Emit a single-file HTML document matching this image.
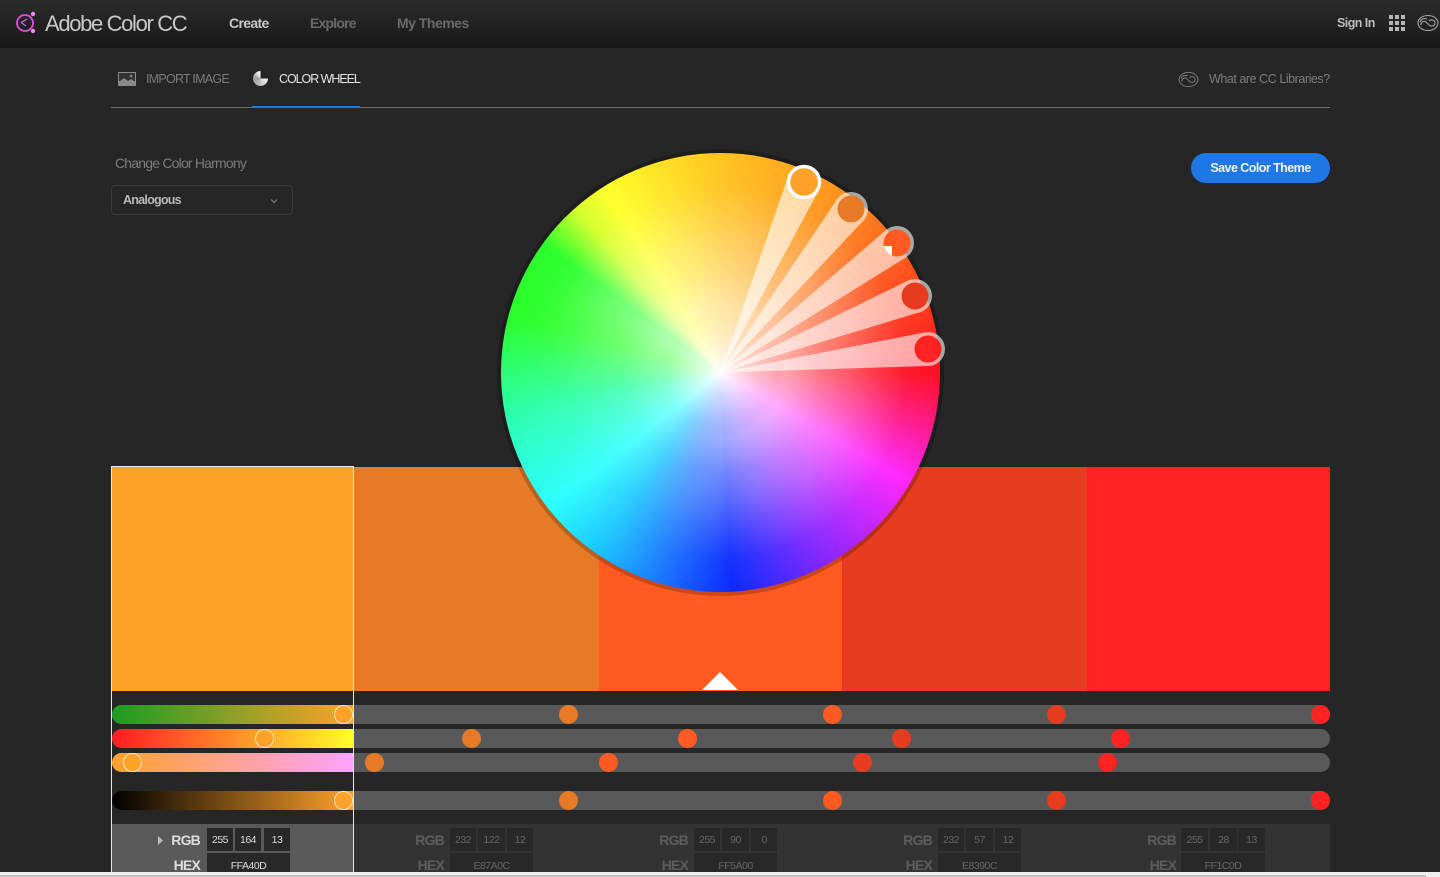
<!DOCTYPE html>
<html><head><meta charset="utf-8"><style>
*{box-sizing:border-box}
html,body{margin:0;padding:0;width:1440px;height:877px;overflow:hidden;background:#262626}
body{position:relative;font-family:"Liberation Sans",sans-serif;filter:blur(.3px)}
.a{position:absolute;white-space:nowrap}
.hdr{position:absolute;left:0;top:0;width:1440px;height:48px;background:linear-gradient(#2b2b2b,#191919)}
.sw{position:absolute;top:467px;height:224px}
.tr{position:absolute;left:112px;width:1218px;height:19px;background:#595959;border-radius:9.5px}
.g{position:absolute;left:112px;width:242px;height:19px;border-radius:9.5px 0 0 9.5px}
.d{position:absolute;width:19px;height:19px;border-radius:50%}
.h{position:absolute;width:19px;height:19px;border-radius:50%;border:1px solid #ffe6c0;background:#ffa22b}
.box{position:absolute;background:#282828;color:#ddd;font-size:10.5px;letter-spacing:-.5px;text-align:center;height:23px;line-height:24px;top:828px}
.hx{top:853px;height:19px;line-height:27px;overflow:hidden}
.dim{color:#666}.lab{position:absolute;font-weight:bold;font-size:14px;letter-spacing:-.8px;text-align:right;width:50px;color:#ddd}
.ld{color:#5d5d5d}
.wh{border-radius:50%}
</style></head><body>
<div class="hdr"></div>
<svg class="a" style="left:14px;top:10px" width="26" height="26" viewBox="0 0 26 26" fill="none"><circle cx="11" cy="13" r="8" stroke="#e050e0" stroke-width="1.8"/><path d="M7 12.500L13 9M7 12.500L12 16" stroke="#e060e0" stroke-width="1.2"/><circle cx="19" cy="4" r="2.200" fill="#f08af0"/><circle cx="19" cy="21" r="2.200" fill="#f08af0"/></svg>
<div class="a" style="left:45px;top:10px;font-size:22px;line-height:27px;letter-spacing:-1.35px;color:#c9c9c9">Adobe Color CC</div>
<div class="a" style="left:229px;top:15px;font-size:14px;line-height:17px;font-weight:bold;letter-spacing:-.65px;color:#c8c8c8">Create</div>
<div class="a" style="left:310px;top:15px;font-size:14px;line-height:17px;font-weight:bold;letter-spacing:-.8px;color:#6a6a6a">Explore</div>
<div class="a" style="left:397px;top:15px;font-size:14px;line-height:17px;font-weight:bold;letter-spacing:-.5px;color:#6a6a6a">My Themes</div>
<div class="a" style="left:1337px;top:16px;font-size:12.5px;line-height:15px;font-weight:bold;letter-spacing:-.55px;color:#bdbdbd">Sign In</div>
<svg class="a" style="left:1389px;top:15px" width="16" height="16" fill="#b5b5b5"><rect width="4" height="4"/><rect x="6" width="4" height="4"/><rect x="12" width="4" height="4"/><rect y="6" width="4" height="4"/><rect x="6" y="6" width="4" height="4"/><rect x="12" y="6" width="4" height="4"/><rect y="12" width="4" height="4"/><rect x="6" y="12" width="4" height="4"/><rect x="12" y="12" width="4" height="4"/></svg>
<svg class="a" style="left:1417px;top:14px" width="22" height="18" viewBox="0 0 22 18" fill="none" stroke="#a5a5a5" stroke-width="1.1"><ellipse cx="11" cy="9" rx="10" ry="7.500"/><path d="M4 11c0-3 3-4.500 5-3l3 3c2 2 6 1 6-2s-4-4-6-2M3 8c1-3 4-4 7-3"/></svg>

<svg class="a" style="left:118px;top:72px" width="18" height="14"><rect width="18" height="14" fill="#8a8a8a"/><rect x="1" y="1" width="16" height="8" fill="#333"/><path d="M1 10l5-4 4 3 3-2 4 3v3H1z" fill="#8a8a8a"/><circle cx="13" cy="4" r="1.300" fill="#8a8a8a"/></svg>
<div class="a" style="left:146px;top:72px;font-size:12.5px;line-height:15px;letter-spacing:-.75px;color:#7b7b7b">IMPORT IMAGE</div>
<div class="a" style="left:253px;top:71px;width:15px;height:15px;border-radius:50%;background:conic-gradient(#222 0 90deg,#eee 90deg,#999 270deg,#fff 360deg)"></div>
<div class="a" style="left:279px;top:72px;font-size:12.5px;line-height:15px;letter-spacing:-1.05px;color:#e4e4e4">COLOR WHEEL</div>
<svg class="a" style="left:1178px;top:71px" width="21" height="17" viewBox="0 0 22 18" fill="none" stroke="#777" stroke-width="1.1"><ellipse cx="11" cy="9" rx="10" ry="7.500"/><path d="M4 11c0-3 3-4.500 5-3l3 3c2 2 6 1 6-2s-4-4-6-2M3 8c1-3 4-4 7-3"/></svg>
<div class="a" style="left:1209px;top:72px;font-size:12.5px;line-height:15px;letter-spacing:-.45px;color:#7d7d7d">What are CC Libraries?</div>
<div class="a" style="left:111px;top:107px;width:1219px;height:1px;background:#6e6e6e"></div>
<div class="a" style="left:252px;top:106px;width:108px;height:2px;background:#2277d8"></div>

<div class="a" style="left:115px;top:155px;font-size:14px;line-height:16px;letter-spacing:-.8px;color:#7c7c7c">Change Color Harmony</div>
<div class="a" style="left:111px;top:185px;width:182px;height:30px;border:1px solid #3a3a3a;border-radius:4px"></div>
<div class="a" style="left:123px;top:193px;font-size:12.5px;line-height:15px;font-weight:bold;letter-spacing:-.75px;color:#b9b9b9">Analogous</div>
<svg class="a" style="left:270px;top:198px" width="8" height="6" fill="none" stroke="#888" stroke-width="1"><path d="M1 1.500l3 3 3-3"/></svg>
<div class="a" style="left:1191px;top:153px;width:139px;height:30px;border-radius:15px;background:#1f77e6;color:#f2f2f2;text-align:center;font-size:12.5px;line-height:30px;font-weight:bold;letter-spacing:-.55px">Save Color Theme</div>

<div class="sw" style="left:111px;width:243px;background:#ffa22b"></div>
<div class="sw" style="left:354px;width:245px;background:#e67a26"></div>
<div class="sw" style="left:599px;width:243px;background:#ff5a20"></div>
<div class="sw" style="left:842px;width:245px;background:#e73c20"></div>
<div class="sw" style="left:1087px;width:243px;background:#ff2222"></div>

<div class="a wh" style="left:497px;top:149px;width:447px;height:447px;background:rgba(0,0,0,.2)"></div>
<div class="a wh" style="left:501px;top:153px;width:439px;height:439px;background:radial-gradient(circle closest-side,#fff 0,rgba(255,255,255,.8) 8%,rgba(255,255,255,.42) 25%,rgba(255,255,255,.2) 45%,rgba(255,255,255,.08) 70%,rgba(255,255,255,0) 100%),conic-gradient(#ffc41f 0deg,#ffa41d 23deg,#ff8a1d 38deg,#ff601b 55deg,#ff3a1c 72deg,#ff0f22 90deg,#ff1a96 106deg,#ff26ff 120deg,#8a26ff 150deg,#0a2aff 177deg,#1a70ff 195deg,#1ac8ff 215deg,#2affff 232deg,#2affb0 258deg,#2aff2a 285deg,#2aff2a 306deg,#d0ff2a 318deg,#ffff2a 328deg,#ffc41f 360deg)"></div>
<div class="a wh" style="left:501px;top:153px;width:439px;height:439px;background:radial-gradient(circle closest-side,rgba(255,255,255,.2) 0,rgba(255,255,255,.38) 30%,rgba(255,255,255,.2) 58%,rgba(255,255,255,0) 85%);-webkit-mask-image:conic-gradient(#000 0deg,#000 180deg,transparent 215deg,transparent 262deg,#000 300deg,#000 360deg);mask-image:conic-gradient(#000 0deg,#000 180deg,transparent 215deg,transparent 262deg,#000 300deg,#000 360deg)"></div>

<svg class="a" style="left:0;top:0" width="1440" height="700">
<g fill="#fff" opacity=".62">
<path d="M720.500 372.500L788.400 175.200 819.600 188.800z"/><circle cx="804" cy="182" r="17"/>
</g>
<g fill="#fff" opacity=".6"><path d="M720.500 372.500L837.700 198.400 864.300 219.600z"/><circle cx="851" cy="209" r="17"/></g>
<g fill="#fff" opacity=".6"><path d="M720.500 372.500L886.900 229.300 907.100 256.700z"/><circle cx="897" cy="243" r="17"/></g>
<g fill="#fff" opacity=".6"><path d="M720.500 372.500L908.700 280.200 921.300 311.800z"/><circle cx="915" cy="296" r="17"/></g>
<g fill="#fff" opacity=".6"><path d="M720.500 372.500L926 332.100 930 365.900z"/><circle cx="928" cy="349" r="17"/></g>
<circle cx="804" cy="182" r="15.500" fill="#ffa22b" stroke="#fff" stroke-width="3.500"/>
<circle cx="851" cy="209" r="13.500" fill="#e67a26"/>
<circle cx="897" cy="243" r="13.500" fill="#ff5a20"/>
<path d="M884 246H892V255.500A13.500 13.500 0 0 1 884 246z" fill="#fff"/>
<circle cx="915" cy="296" r="13.500" fill="#e73c20"/>
<circle cx="928" cy="349" r="13.500" fill="#ff2222"/>
<path d="M702 690L720 672 738 690z" fill="#fff"/>
</svg>

<div class="tr" style="top:705px"></div><div class="tr" style="top:729px"></div><div class="tr" style="top:753px"></div><div class="tr" style="top:791px"></div>
<div class="g" style="top:705px;background:linear-gradient(90deg,#1c9c22,#ffa22b)"></div>
<div class="g" style="top:729px;background:linear-gradient(90deg,#ff1c22,#ffa22b 60%,#ffff2a)"></div>
<div class="g" style="top:753px;background:linear-gradient(90deg,#ffa22b,#ffa2ff)"></div>
<div class="g" style="top:791px;background:linear-gradient(90deg,#000,#ffa22b)"></div>

<div class="h" style="left:334px;top:705px"></div><div class="h" style="left:254.500px;top:729px"></div><div class="h" style="left:122.500px;top:753px"></div><div class="h" style="left:334px;top:791px"></div>

<div class="d" style="left:559px;top:705px;background:#e67a26"></div><div class="d" style="left:823px;top:705px;background:#ff5a20"></div><div class="d" style="left:1047px;top:705px;background:#e73c20"></div><div class="d" style="left:1311px;top:705px;background:#ff2222"></div>
<div class="d" style="left:461.500px;top:729px;background:#e67a26"></div><div class="d" style="left:678px;top:729px;background:#ff5a20"></div><div class="d" style="left:892px;top:729px;background:#e73c20"></div><div class="d" style="left:1111px;top:729px;background:#ff2222"></div>
<div class="d" style="left:365px;top:753px;background:#e67a26"></div><div class="d" style="left:598.500px;top:753px;background:#ff5a20"></div><div class="d" style="left:852.500px;top:753px;background:#e73c20"></div><div class="d" style="left:1097.500px;top:753px;background:#ff2222"></div>
<div class="d" style="left:559px;top:791px;background:#e67a26"></div><div class="d" style="left:823px;top:791px;background:#ff5a20"></div><div class="d" style="left:1047px;top:791px;background:#e73c20"></div><div class="d" style="left:1311px;top:791px;background:#ff2222"></div>

<div class="a" style="left:112px;top:824px;width:242px;height:48px;background:#5a5a5a"></div>
<div class="a" style="left:354px;top:824px;width:976px;height:48px;background:#333"></div>
<svg class="a" style="left:158px;top:836px" width="6" height="9"><path d="M0 0l5 4.500-5 4.500z" fill="#bbb"/></svg>
<div class="lab" style="left:150px;top:832px">RGB</div>
<div class="lab" style="left:150px;top:857px;line-height:16px">HEX</div>
<div class="box" style="left:207px;width:26px">255</div><div class="box" style="left:235px;width:26px">164</div><div class="box" style="left:264px;width:26px">13</div><div class="box hx" style="left:207px;width:83px">FFA40D</div>

<div class="lab ld" style="left:394px;top:832px">RGB</div><div class="lab ld" style="left:394px;top:857px;line-height:16px">HEX</div>
<div class="box dim" style="left:450px;width:26px">232</div><div class="box dim" style="left:478px;width:27px">122</div><div class="box dim" style="left:507px;width:26px">12</div><div class="box dim hx" style="left:450px;width:83px">E87A0C</div>

<div class="lab ld" style="left:638px;top:832px">RGB</div><div class="lab ld" style="left:638px;top:857px;line-height:16px">HEX</div>
<div class="box dim" style="left:694px;width:26px">255</div><div class="box dim" style="left:722px;width:27px">90</div><div class="box dim" style="left:751px;width:26px">0</div><div class="box dim hx" style="left:694px;width:83px">FF5A00</div>

<div class="lab ld" style="left:882px;top:832px">RGB</div><div class="lab ld" style="left:882px;top:857px;line-height:16px">HEX</div>
<div class="box dim" style="left:938px;width:26px">232</div><div class="box dim" style="left:966px;width:27px">57</div><div class="box dim" style="left:995px;width:26px">12</div><div class="box dim hx" style="left:938px;width:83px">E8390C</div>

<div class="lab ld" style="left:1126px;top:832px">RGB</div><div class="lab ld" style="left:1126px;top:857px;line-height:16px">HEX</div>
<div class="box dim" style="left:1181px;width:27px">255</div><div class="box dim" style="left:1210px;width:27px">28</div><div class="box dim" style="left:1238px;width:27px">13</div><div class="box dim hx" style="left:1181px;width:84px">FF1C0D</div>

<div class="a" style="left:111px;top:466px;width:243px;height:406px;border:1px solid #e8e8e8;border-bottom:0;background:transparent"></div>

<div class="a" style="left:0;top:872px;width:1440px;height:5px;background:#efefef"></div>
<div class="a" style="left:0;top:875px;width:1426px;height:2px;background:#c4c4c4"></div>
</body></html>
